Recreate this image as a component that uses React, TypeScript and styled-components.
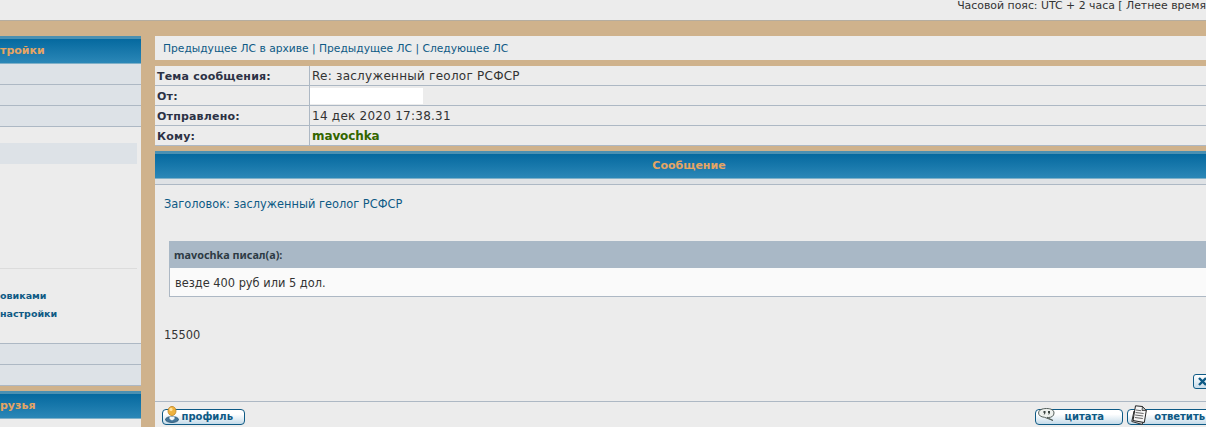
import React from 'react'
import styled, { createGlobalStyle } from 'styled-components'

const GlobalStyle = createGlobalStyle`
  html, body {
    margin: 0;
    padding: 0;
    background: #cfb28c;
    overflow: hidden;
  }
  body {
    font-family: "DejaVu Sans", Verdana, sans-serif;
    font-size: 11px;
    color: #333;
  }
`

const Page = styled.div`
  width: 1206px;
  height: 427px;
  overflow: hidden;
`

const TopBar = styled.div`
  height: 20px;
  background: #ececec;
  border-bottom: 1px solid #b5ada0;
  display: flex;
  justify-content: flex-end;
`

const TimeZone = styled.span`
  font-size: 10.9px;
  line-height: 12px;
  white-space: nowrap;
  color: #333;
`

const Columns = styled.div`
  display: flex;
  gap: 14px;
  padding-top: 15px;
`

const Sidebar = styled.aside`
  width: 141px;
  flex: none;
  overflow: hidden;
`

const BlueHead = styled.div<{ $center?: boolean }>`
  height: 28px;
  box-sizing: border-box;
  border-top: 3px solid #4a90b2;
  border-bottom: 1px solid #7fb0c8;
  background: linear-gradient(#05699f, #2b87b7);
  color: #e5a564;
  font-weight: bold;
  font-size: 11px;
  line-height: 23px;
  white-space: nowrap;
  text-align: ${(p) => (p.$center ? 'center' : 'left')};
`

const SideRow = styled.div`
  height: 21px;
  box-sizing: border-box;
  background: #dde2e7;
  border-bottom: 1px solid #adb8c4;
`

const SideBody = styled.div`
  height: 217px;
  box-sizing: border-box;
  background: #ececec;
  border-bottom: 1px solid #adb8c4;
  padding: 16px 4px 0 0;
  display: flex;
  flex-direction: column;
`

const SideActive = styled.div`
  height: 21px;
  flex: none;
  background: #dde2e7;
`

const SideDivider = styled.div`
  margin-top: 104px;
  border-top: 1px solid #dcdcdc;
`

const SideLinks = styled.div`
  margin-top: 18px;
  display: flex;
  flex-direction: column;
`

const SideLink = styled.a`
  height: 18px;
  line-height: 18px;
  font-size: 9.5px;
  font-weight: bold;
  color: #0e5a85;
  white-space: nowrap;
`

const SideGap = styled.div`
  height: 5px;
`

const SideFoot = styled.div`
  height: 9px;
  background: #ececec;
`

const Main = styled.main`
  width: 1068px;
  flex: none;
`

const NavBar = styled.div`
  height: 24px;
  background: #ececec;
  color: #0e5a85;
  font-size: 10.7px;
  line-height: 26px;
  padding-left: 8px;
  white-space: nowrap;
`

const MetaTable = styled.div`
  margin-top: 6px;
  display: grid;
  grid-template-columns: 155px 1fr;
  background: #ececec;
`

const MetaLabel = styled.div`
  height: 20px;
  box-sizing: border-box;
  padding-left: 2px;
  border-right: 1px solid #adb8c4;
  border-bottom: 1px solid #adb8c4;
  font-weight: bold;
  letter-spacing: 0.2px;
  line-height: 21px;
  color: #2c3245;
  white-space: nowrap;
`

const MetaValue = styled.div`
  height: 20px;
  box-sizing: border-box;
  padding-left: 2px;
  border-bottom: 1px solid #adb8c4;
  font-size: 12px;
  letter-spacing: 0.25px;
  line-height: 21px;
  color: #333;
  white-space: nowrap;
`

const HiddenName = styled.div`
  width: 113px;
  height: 16px;
  margin: 2px 0 0 -2px;
  background: #fff;
`

const Recipient = styled.span`
  font-weight: bold;
  letter-spacing: -0.1px;
  color: #336600;
`

const Tan = styled.div`
  height: 5px;
`

const SubBar = styled.div`
  height: 6px;
  box-sizing: border-box;
  background: #dfe2e5;
  border-bottom: 1px solid #adb8c4;
`

const MessageBody = styled.div`
  height: 216px;
  box-sizing: border-box;
  background: #ececec;
  padding: 12px 9px 0;
  display: flex;
  flex-direction: column;
  font-size: 11.4px;
`

const MessageTitle = styled.div`
  color: #0e5a85;
  line-height: 14px;
`

const Quote = styled.div`
  margin: 30px 0 0 5px;
  border: 1px solid #adb8c4;
  border-top: 0;
  background: #fafafa;
`

const QuoteHead = styled.div`
  height: 27px;
  background: #a9b8c6;
  color: #2d3a44;
  font-family: "Noto Sans", sans-serif;
  font-size: 10.8px;
  font-weight: bold;
  line-height: 27px;
  padding-left: 5px;
  margin: 0 -1px;
`

const QuoteText = styled.div`
  height: 28px;
  line-height: 30px;
  padding-left: 5px;
  color: #333;
`

const Answer = styled.div`
  margin-top: 31px;
  line-height: 14px;
  color: #333;
`

const CloseButton = styled.div`
  margin: 32px 0 0 1029px;
  width: 20px;
  height: 15px;
  box-sizing: border-box;
  border: 1px solid #0e5a85;
  border-radius: 3px;
  background: linear-gradient(#fff, #c8dcea);
  display: flex;
  align-items: center;
  padding-left: 3px;
`

const Footer = styled.div`
  height: 26px;
  box-sizing: border-box;
  background: #ececec;
  border-top: 1px solid #adb8c4;
  display: flex;
  justify-content: space-between;
  padding: 6px 9px 0 7px;
`

const ButtonGroup = styled.div`
  display: flex;
  gap: 4px;
`

const PostButton = styled.div<{ $width: number }>`
  position: relative;
  width: ${(p) => p.$width}px;
  height: 16px;
  box-sizing: border-box;
  border: 1px solid #0e5a85;
  border-radius: 4px;
  background: linear-gradient(#ffffff 30%, #c5dbe9);
  color: #0e5a85;
  font-size: 10px;
  font-weight: bold;
  line-height: 14px;
  text-align: right;
  white-space: nowrap;
  margin-top: 1px;
`

const ButtonLabel = styled.span<{ $right: number }>`
  margin-right: ${(p) => p.$right}px;
`

const ButtonIcon = styled.svg<{ $left: number; $bottom: number }>`
  position: absolute;
  left: ${(p) => p.$left}px;
  bottom: ${(p) => p.$bottom}px;
`

const ProfileIcon = () => (
  <ButtonIcon $left={2} $bottom={1} width="14" height="17" viewBox="0 0 14 17">
    <ellipse cx="7" cy="13.500" rx="6.500" ry="3" fill="#45769a" stroke="#23506f" strokeWidth="0.8" />
    <path d="M4.500 10.500h5v2.500L7 14.500 4.500 13z" fill="#f2f6f8" />
    <ellipse cx="7" cy="5" rx="4" ry="4.600" fill="#efb23f" stroke="#c08522" strokeWidth="0.8" />
    <ellipse cx="6" cy="3.500" rx="1.600" ry="1.800" fill="#ffe09a" />
  </ButtonIcon>
)

const QuoteIcon = () => (
  <ButtonIcon $left={2} $bottom={3} width="18" height="13" viewBox="0 0 18 13">
    <path
      d="M8.500 .5C13 .5 16 2 16 5s-2.500 4.500-5.500 4.500c-.6 0-1 0-1.500-.1L15 12.500 6.500 9.300C3 9 .6 7.500 .6 5 .6 2 4 .5 8.500 .5z"
      fill="#eef1ee"
      stroke="#55605c"
    />
    <path d="M5.500 3h2v2l-1 1.500h-.8l.6-1.500h-.8zM10 3h2v2l-1 1.500h-.8l.6-1.500H10z" fill="#39433f" />
  </ButtonIcon>
)

const ReplyIcon = () => (
  <ButtonIcon $left={3} $bottom={-1} width="16" height="20" viewBox="0 0 16 20">
    <path d="M3 6L.8 16.500l10.500 3 1-4z" fill="#d6d9d9" stroke="#333" />
    <path d="M4.500 .8l7 .7 3.800 4-2 12L2 15.500z" fill="#f6f6f6" stroke="#222" />
    <path d="M11.500 1.500l-.5 4 4.300 0z" fill="#bcc0c0" stroke="#222" strokeWidth="0.7" />
    <path d="M5 5l5 .7M4.600 7.500l8 1M4.200 10l8 1M3.800 12.500l8 1" stroke="#666" strokeWidth="1" />
  </ButtonIcon>
)

export default function App() {
  return (
    <Page>
      <GlobalStyle />
      <TopBar>
        <TimeZone>Часовой пояс: UTC + 2 часа [ Летнее время</TimeZone>
      </TopBar>
      <Columns>
        <Sidebar>
          <BlueHead>тройки</BlueHead>
          <SideRow />
          <SideRow />
          <SideRow />
          <SideBody>
            <SideActive />
            <SideDivider />
            <SideLinks>
              <SideLink>овиками</SideLink>
              <SideLink>настройки</SideLink>
            </SideLinks>
          </SideBody>
          <SideRow />
          <SideRow />
          <SideGap />
          <BlueHead>рузья</BlueHead>
          <SideFoot />
        </Sidebar>
        <Main>
          <NavBar>Предыдущее ЛС в архиве | Предыдущее ЛС | Следующее ЛС</NavBar>
          <MetaTable>
            <MetaLabel>Тема сообщения:</MetaLabel>
            <MetaValue>Re: заслуженный геолог РСФСР</MetaValue>
            <MetaLabel>От:</MetaLabel>
            <MetaValue>
              <HiddenName />
            </MetaValue>
            <MetaLabel>Отправлено:</MetaLabel>
            <MetaValue>14 дек 2020 17:38.31</MetaValue>
            <MetaLabel>Кому:</MetaLabel>
            <MetaValue>
              <Recipient>mavochka</Recipient>
            </MetaValue>
          </MetaTable>
          <Tan />
          <BlueHead $center>Сообщение</BlueHead>
          <SubBar />
          <MessageBody>
            <MessageTitle>Заголовок: заслуженный геолог РСФСР</MessageTitle>
            <Quote>
              <QuoteHead>mavochka писал(а):</QuoteHead>
              <QuoteText>везде 400 руб или 5 дол.</QuoteText>
            </Quote>
            <Answer>15500</Answer>
            <CloseButton>
              <svg width="11" height="9" viewBox="0 0 11 9">
                <path d="M2 1l7 7M9 1L2 8" stroke="#0e5a85" strokeWidth="2.400" />
              </svg>
            </CloseButton>
          </MessageBody>
          <Footer>
            <PostButton $width={83}>
              <ProfileIcon />
              <ButtonLabel $right={11}>профиль</ButtonLabel>
            </PostButton>
            <ButtonGroup>
              <PostButton $width={88}>
                <QuoteIcon />
                <ButtonLabel $right={18}>цитата</ButtonLabel>
              </PostButton>
              <PostButton $width={87}>
                <ReplyIcon />
                <ButtonLabel $right={8}>ответить</ButtonLabel>
              </PostButton>
            </ButtonGroup>
          </Footer>
        </Main>
      </Columns>
    </Page>
  )
}
